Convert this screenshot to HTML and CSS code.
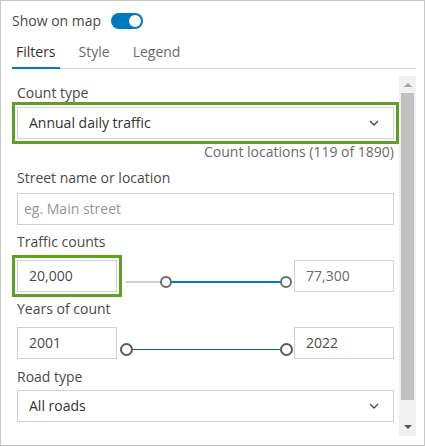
FILE: index.html
```html
<!DOCTYPE html>
<html>
<head>
<meta charset="utf-8">
<link rel="stylesheet" href="styles.css">
</head>
<body>
<div class="panel">
  <div class="header">
    <span class="header-label">Show on map</span>
    <span class="toggle"><span class="knob"></span></span>
  </div>
  <div class="tabs">
    <div class="tab active">Filters</div>
    <div class="tab">Style</div>
    <div class="tab">Legend</div>
  </div>
  <div class="body">
    <div class="content">
      <div class="label first">Count type</div>
      <div class="select highlight">
        <span class="value">Annual daily traffic</span>
        <svg class="chev" width="10" height="6" viewBox="0 0 10 6"><path d="M1 1l4 4 4-4" fill="none" stroke="#4a4a4a" stroke-width="1.4"/></svg>
      </div>
      <div class="count">Count locations (119 of 1890)</div>
      <div class="label">Street name or location</div>
      <div class="input placeholder">eg. Main street</div>
      <div class="label">Traffic counts</div>
      <div class="range-row">
        <div class="input small highlight">20,000</div>
        <div class="slider">
          <div class="track">
            <div class="fill traffic"></div>
            <span class="thumb t1"></span>
            <span class="thumb t2"></span>
          </div>
        </div>
        <div class="input small light">77,300</div>
      </div>
      <div class="label">Years of count</div>
      <div class="range-row">
        <div class="input small">2001</div>
        <div class="slider">
          <div class="track thin">
            <div class="fill years"></div>
            <span class="thumb big y1"></span>
            <span class="thumb big y2"></span>
          </div>
        </div>
        <div class="input small">2022</div>
      </div>
      <div class="label road">Road type</div>
      <div class="select road-select">
        <span class="value">All roads</span>
        <svg class="chev" width="10" height="6" viewBox="0 0 10 6"><path d="M1 1l4 4 4-4" fill="none" stroke="#4a4a4a" stroke-width="1.4"/></svg>
      </div>
    </div>
    <div class="scrollbar">
      <div class="arrow up"></div>
      <div class="sb-thumb"></div>
      <div class="arrow down"></div>
    </div>
  </div>
</div>
</body>
</html>
```

FILE: styles.css
```css
* { box-sizing: border-box; }
html, body { margin: 0; padding: 0; background: #fff; }
body {
  font-family: "Open Sans", "Noto Sans", sans-serif;
  font-size: 14px;
  color: #4a4a4a;
}
.panel {
  width: 425px;
  height: 446px;
  border: 1px solid #c6c6c6;
  overflow: hidden;
}
.header {
  display: flex;
  align-items: center;
  gap: 10px;
  padding: 12px 0 0 11px;
  height: 28px;
}
.header-label { font-size: 14px; line-height: 16px; color: #4a4a4a; }
.toggle {
  width: 32px;
  height: 16px;
  border-radius: 8px;
  background: #0079c1;
  display: flex;
  align-items: center;
  justify-content: flex-end;
  padding-right: 2px;
}
.knob {
  width: 12px;
  height: 12px;
  border-radius: 50%;
  background: #fff;
}
.tabs {
  display: flex;
  gap: 15px;
  margin: 8px 8px 0 11px;
  border-bottom: 1px solid #d0d0d0;
  height: 32px;
}
.tab {
  padding: 5px 4px;
  line-height: 20px;
  height: 32px;
  border-bottom: 2px solid transparent;
  margin-bottom: -1px;
  color: #6a6a6a;
}
.tab.active { color: #323232; border-bottom-color: #0079c1; }
.body {
  display: flex;
  margin: 7px 8px 0 11px;
  height: 360px;
}
.content {
  flex: 1;
  padding: 0 5px;
}
.label { line-height: 20px; margin-top: 7px; color: #4a4a4a; }
.label.first { margin-top: 7px; }
.label.road { margin-top: 8px; }
.select, .input {
  border: 1px solid #d2d2d2;
  height: 32px;
  display: flex;
  align-items: center;
  padding: 0 11px;
  line-height: 20px;
  background: #fff;
}
.select { justify-content: space-between; margin-top: 4px; padding-right: 14px; }
.select .value { color: #323232; }
.chev { display: block; }
.highlight { outline: 3px solid #5f9f25; outline-offset: 2px; }
.count {
  text-align: right;
  line-height: 18px;
  margin-top: 4px;
  color: #6a6a6a;
}
.input { margin-top: 5px; }
.placeholder { color: #959595; padding-left: 6px; }
.range-row {
  display: flex;
  margin-top: 8px;
  height: 32px;
}
.input.small { width: 100px; margin-top: 0; color: #4a4a4a; align-items: flex-start; padding-top: 5px; }
.input.light { color: #6a6a6a; }
.slider {
  flex: 1;
  padding: 0 8px 0 9px;
}
.track {
  position: relative;
  margin-top: 21px;
  height: 2px;
  background: #cfcfcf;
}
.track.thin { height: 1px; margin-top: 22px; background: #005e95; }
.fill { position: absolute; top: 0; bottom: 0; background: #0079c1; }
.fill.traffic { left: 25%; right: 0; }
.fill.years { left: 0; right: 0; background: #005e95; }
.thumb {
  position: absolute;
  width: 12px;
  height: 12px;
  top: -5px;
  margin-left: -6px;
  border-radius: 50%;
  background: #fff;
  border: 2px solid #6a6a6a;
}
.thumb.big { width: 13px; height: 13px; top: -6px; margin-left: -6px; border-color: #5a5a5a; }
.t1 { left: 25%; }
.t2 { left: 100%; }
.y1 { left: 0; }
.y2 { left: 100%; }
.road-select { margin-top: 3px; }
.scrollbar {
  width: 17px;
  background: #f1f1f1;
  display: flex;
  flex-direction: column;
  align-items: center;
}
.arrow { width: 0; height: 0; border-left: 4px solid transparent; border-right: 4px solid transparent; }
.arrow.up { margin-top: 7px; border-bottom: 4px solid #a3a3a3; }
.sb-thumb { width: 13px; height: 307px; margin-top: 6px; background: #c1c1c1; }
.arrow.down { margin-top: 25px; border-top: 4px solid #505050; }
```
